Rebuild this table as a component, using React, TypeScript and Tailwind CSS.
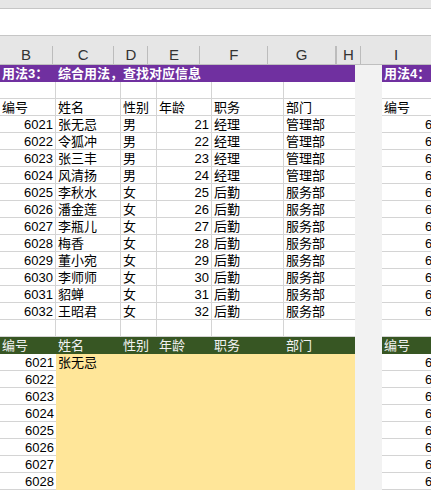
import clsx from "clsx"

const people: [number, string, string, number, string, string][] = [
  [6021, "张无忌", "男", 21, "经理", "管理部"],
  [6022, "令狐冲", "男", 22, "经理", "管理部"],
  [6023, "张三丰", "男", 23, "经理", "管理部"],
  [6024, "风清扬", "男", 24, "经理", "管理部"],
  [6025, "李秋水", "女", 25, "后勤", "服务部"],
  [6026, "潘金莲", "女", 26, "后勤", "服务部"],
  [6027, "李瓶儿", "女", 27, "后勤", "服务部"],
  [6028, "梅香", "女", 28, "后勤", "服务部"],
  [6029, "董小宛", "女", 29, "后勤", "服务部"],
  [6030, "李师师", "女", 30, "后勤", "服务部"],
  [6031, "貂蝉", "女", 31, "后勤", "服务部"],
  [6032, "王昭君", "女", 32, "后勤", "服务部"],
]

const widths = ["w-[56px]", "w-[65px]", "w-[36px]", "w-[55px]", "w-[72px]", "w-[71px]"]
const letters = ["B", "C", "D", "E", "F", "G"]

function Cell({ w, right, last, children }: { w: string; right?: boolean; last?: boolean; children?: React.ReactNode }) {
  return (
    <div
      className={clsx(
        "shrink-0 h-[17px] border-b border-[#d4d4d4] px-[2px] leading-[18px] whitespace-nowrap overflow-hidden",
        w,
        right && "text-right",
        !last && "border-r"
      )}
    >
      {children}
    </div>
  )
}

function Row({ cells }: { cells: { text?: React.ReactNode; right?: boolean }[] }) {
  return (
    <div className="flex">
      {cells.map((c, i) => (
        <Cell key={i} w={widths[i]} right={c.right} last={i === 5}>
          {c.text}
        </Cell>
      ))}
    </div>
  )
}

function Band({ color, bold, children }: { color: string; bold?: boolean; children: React.ReactNode }) {
  return (
    <div className={clsx("flex h-[17px] leading-[18px] whitespace-nowrap overflow-hidden", color, bold && "font-bold")}>
      {children}
    </div>
  )
}

export default function App() {
  return (
    <div className="w-[431px] h-[490px] overflow-hidden bg-white text-[13px] text-black font-[family-name:'Liberation_Sans','Noto_Sans_CJK_SC',sans-serif]">
      {/* toolbar strips */}
      <div className="h-[9px] bg-[#e6e6e6] border-b border-[#c6c6c6]" />
      <div className="h-[27px] bg-white border-b border-[#c6c6c6]" />
      {/* column letters */}
      <div className="flex items-end h-[29px] bg-[#e6e6e6] border-b border-[#bfbfbf] text-[15px] text-[#333]">
        {letters.map((l, i) => (
          <div key={l} className={clsx("h-[18px] leading-[18px] text-center border-r border-[#bcbcbc]", widths[i], i === 5 && "w-[70px]")}>
            {l}
          </div>
        ))}
        <div className="w-[27px] h-[18px] leading-[18px] text-center border-x border-[#bcbcbc] bg-[#e6e6e6]">H</div>
        <div className="w-[74px] h-[18px] leading-[18px] text-center">I</div>
      </div>

      <div className="flex">
        {/* B..G */}
        <div className="w-[355px] shrink-0 flex flex-col">
          <Band color="bg-[#7030a0] text-white" bold>
            <span className="w-[56px] shrink-0 px-[2px]">用法3：</span>
            <span className="px-[2px]">综合用法，查找对应信息</span>
          </Band>
          <Row cells={[{}, {}, {}, {}, {}, {}]} />
          <Row cells={[{ text: "编号" }, { text: "姓名" }, { text: "性别" }, { text: "年龄" }, { text: "职务" }, { text: "部门" }]} />
          {people.map((p) => (
            <Row
              key={p[0]}
              cells={[
                { text: p[0], right: true },
                { text: p[1] },
                { text: p[2] },
                { text: p[3], right: true },
                { text: p[4] },
                { text: p[5] },
              ]}
            />
          ))}
          <Row cells={[{}, {}, {}, {}, {}, {}]} />
          <Band color="bg-[#375623] text-[#f2f2f2]">
            {["编号", "姓名", "性别", "年龄", "职务", "部门"].map((t, i) => (
              <span key={t} className={clsx("shrink-0 px-[2px]", widths[i])}>
                {t}
              </span>
            ))}
          </Band>
          <div className="flex">
            <div className="flex flex-col">
              {people.slice(0, 8).map((p) => (
                <Cell key={p[0]} w="w-[56px]" right last>
                  {p[0]}
                </Cell>
              ))}
            </div>
            <div className="flex-1 bg-[#ffe699] px-[2px] leading-[18px]">张无忌</div>
          </div>
        </div>

        {/* H */}
        <div className="w-[27px] shrink-0 bg-[#f2f2f2]" />

        {/* I */}
        <div className="w-[74px] shrink-0 flex flex-col">
          <Band color="bg-[#7030a0] text-white" bold>
            <span className="px-[2px]">用法4：</span>
          </Band>
          <Cell w="w-[74px]" last />
          <Cell w="w-[74px]" last>
            编号
          </Cell>
          {people.map((p) => (
            <Cell key={p[0]} w="w-[74px]" right last>
              {p[0]}
            </Cell>
          ))}
          <Cell w="w-[74px]" last />
          <Band color="bg-[#375623] text-[#f2f2f2]">
            <span className="px-[2px]">编号</span>
          </Band>
          {people.slice(0, 8).map((p) => (
            <Cell key={p[0]} w="w-[74px]" right last>
              {p[0]}
            </Cell>
          ))}
        </div>
      </div>
    </div>
  )
}
